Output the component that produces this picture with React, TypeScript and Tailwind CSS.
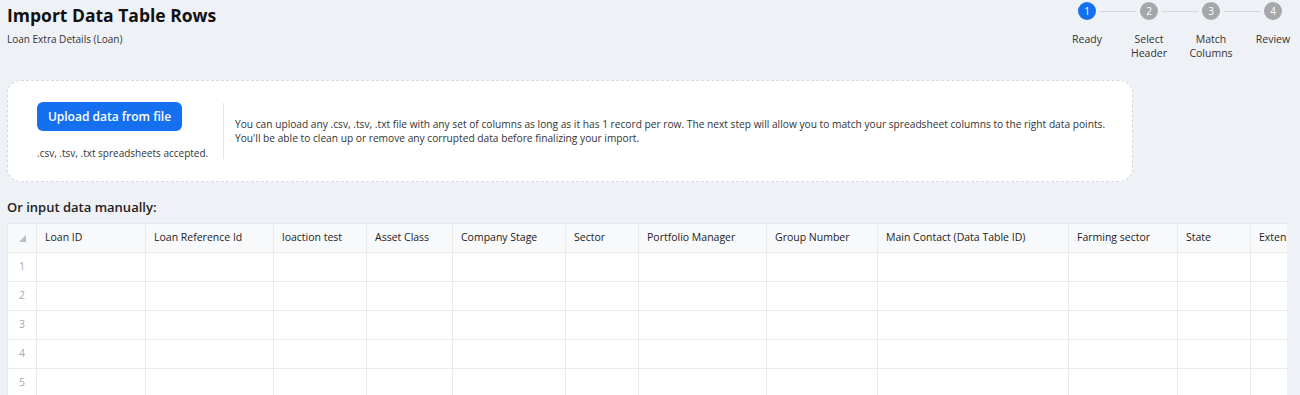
import type { ReactNode } from 'react';

const STEPS = [
  { n: 1, label: ['Ready'] },
  { n: 2, label: ['Select', 'Header'] },
  { n: 3, label: ['Match', 'Columns'] },
  { n: 4, label: ['Review'] },
];

const COLUMNS = [
  'Loan ID',
  'Loan Reference Id',
  'loaction test',
  'Asset Class',
  'Company Stage',
  'Sector',
  'Portfolio Manager',
  'Group Number',
  'Main Contact (Data Table ID)',
  'Farming sector',
  'State',
  'Extension Officer',
];

function Stepper() {
  return (
    <div className="mr-[-11px] flex flex-col pt-[2px]">
      <div className="flex items-center pl-[22px]">
        {STEPS.map((s, i) => (
          <div key={s.n} className="flex items-center">
            <div
              className={`flex h-[18px] w-[18px] items-center justify-center rounded-full text-[10px] text-white ${
                i === 0 ? 'bg-[#1570ef]' : 'bg-[#a6a7aa]'
              }`}
            >
              {s.n}
            </div>
            {i < STEPS.length - 1 && <div className="mx-[4px] h-px w-[36px] bg-[#d3d5d9]" />}
          </div>
        ))}
      </div>
      <div className="mt-[12px] flex">
        {STEPS.map((s) => (
          <div key={s.n} className="flex w-[62px] flex-col items-center text-[10.5px] leading-[14px] text-[#333]">
            {s.label.map((l) => (
              <span key={l}>{l}</span>
            ))}
          </div>
        ))}
      </div>
    </div>
  );
}

function Cell({ children, head }: { children?: ReactNode; head?: boolean }) {
  return (
    <div
      className={`flex h-[29px] items-center overflow-hidden whitespace-nowrap border-b border-r border-[#e8eaee] px-[8px] text-[10.5px] ${
        head ? 'bg-[#f8f9fb] font-medium text-[#222]' : 'bg-white'
      }`}
    >
      {children}
    </div>
  );
}

export default function App() {
  const rows = [1, 2, 3, 4, 5];
  return (
    <div className="h-[395px] w-[1300px] overflow-hidden bg-[#eef1f6] px-[7px] font-['Open_Sans',sans-serif] text-[#333]">
      <div className="flex items-start justify-between">
        <div className="pt-[2px]">
          <h1 className="text-[17.5px] font-bold leading-[26px] text-[#111]">Import Data Table Rows</h1>
          <p className="mt-[4px] text-[10px] leading-[14px]">Loan Extra Details (Loan)</p>
        </div>
        <Stepper />
      </div>

      <div className="mt-[20px] flex h-[102px] w-[1126px] items-center rounded-[14px] border border-dashed border-[#d6d9de] bg-white pl-[29px]">
        <div className="flex w-[175px] shrink-0 flex-col items-start">
          <button className="h-[29px] w-[145px] rounded-[6px] bg-[#1570ef] text-[12px] font-semibold text-white">
            Upload data from file
          </button>
          <p className="mt-[15px] text-[10px] leading-[14px]">.csv, .tsv, .txt spreadsheets accepted.</p>
        </div>
        <div className="ml-[11px] h-[56px] w-px shrink-0 bg-[#e3e5e9]" />
        <p className="ml-[11px] text-[10.2px] leading-[14px]">
          You can upload any .csv, .tsv, .txt file with any set of columns as long as it has 1 record per row. The next
          step will allow you to match your spreadsheet columns to the right data points.
          <br />
          You'll be able to clean up or remove any corrupted data before finalizing your import.
        </p>
      </div>

      <h2 className="mt-[15px] text-[13px] font-semibold leading-[20px] text-[#222]">Or input data manually:</h2>

      <div className="mt-[6px] w-[1280px] overflow-hidden rounded-tl-[4px] border-l border-t border-[#e8eaee] shadow-[inset_-3px_0_3px_-2px_rgba(0,0,0,0.08)]">
        <div className="grid grid-cols-[29px_109px_128px_93px_86px_113px_73px_128px_111px_191px_109px_73px_120px]">
          <div className="flex h-[29px] items-center justify-center border-b border-r border-[#e8eaee] bg-[#f8f9fb]">
            <svg width="7" height="7" viewBox="0 0 7 7">
              <path d="M7 0 L7 7 L0 7 Z" fill="#b9bcc1" />
            </svg>
          </div>
          {COLUMNS.map((c) => (
            <Cell key={c} head>
              {c}
            </Cell>
          ))}
          {rows.map((r) => (
            <div key={r} className="contents">
              <div className="flex h-[29px] items-center justify-center border-b border-r border-[#e8eaee] bg-white text-[10.5px] text-[#aaa]">
                {r}
              </div>
              {COLUMNS.map((c) => (
                <Cell key={c} />
              ))}
            </div>
          ))}
        </div>
      </div>
    </div>
  );
}
